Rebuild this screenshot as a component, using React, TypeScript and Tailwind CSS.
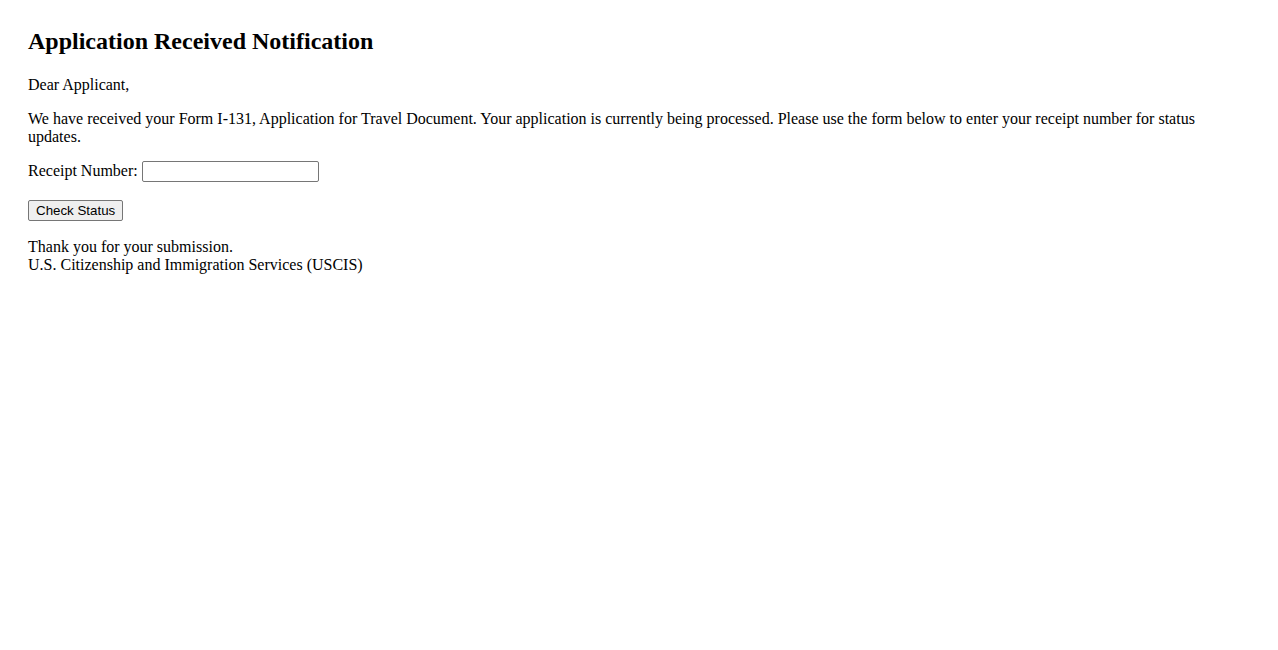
import React, { useState } from 'react';

const App: React.FC = () => {
  const [receipt, setReceipt] = useState('');

  return (
    <div className="min-h-screen bg-white p-[28px] text-black font-['Liberation_Serif',serif] text-[16px] leading-[1.15]">
      <h2 className="text-[24px] font-bold leading-[1.15] mb-[20px]">Application Received Notification</h2>
      <p className="mb-[16px]">Dear Applicant,</p>
      <p className="mb-[14px]">
        We have received your Form I-131, Application for Travel Document. Your application is currently being processed. Please use the form below to enter your receipt number for status updates.
      </p>
      <form onSubmit={e => e.preventDefault()}>
        <div className="flex items-center mb-[18px]">
          <label htmlFor="receipt">Receipt Number:</label>
          <input
            id="receipt"
            type="text"
            value={receipt}
            onChange={e => setReceipt(e.target.value)}
            className="ml-[4px] w-[177px] h-[21px] border border-[#767676] rounded-[2px] px-[2px] py-[1px] bg-white text-[13px] font-['Liberation_Sans',sans-serif]"
          />
        </div>
        <button
          type="submit"
          className="h-[21px] px-[7px] bg-[#efefef] border border-[#767676] rounded-[2px] text-[13.33px] leading-none font-['Liberation_Sans',sans-serif] mb-[17px]"
        >
          Check Status
        </button>
      </form>
      <p>
        Thank you for your submission.
        <br />
        U.S. Citizenship and Immigration Services (USCIS)
      </p>
    </div>
  );
};

export default App;
